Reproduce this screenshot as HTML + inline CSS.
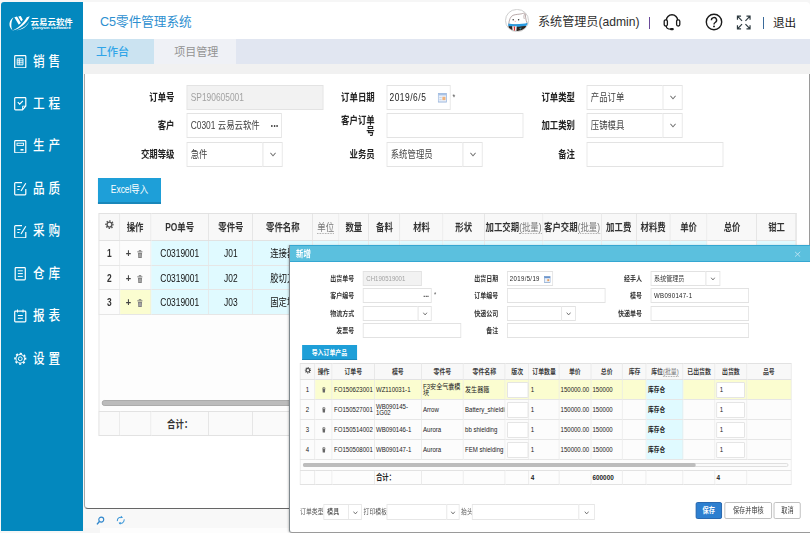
<!DOCTYPE html><html lang="zh"><head><meta charset="utf-8"><title>C5零件管理系统</title><style>
*{box-sizing:border-box;margin:0;padding:0}
html,body{width:810px;height:533px;overflow:hidden;background:#f6f6f6}
body{position:relative;font-family:"Liberation Sans","Noto Sans CJK SC",sans-serif;color:#222}
div,span,svg{position:absolute}
span.t{position:static}
.side{left:1px;top:2px;width:82.400px;height:529px;background:#0388be;border-radius:3px 0 0 0}
.mi{left:13px;width:70px;height:16px;color:#fff;font-size:13.500px;line-height:16px;font-weight:500}
.mi svg{left:0;top:1.300px}
.mi b{position:absolute;left:19px;top:0;font-weight:500;letter-spacing:4.500px;white-space:nowrap;transform-origin:0 0;transform:scaleX(.86)}
.head{left:83.400px;top:1.500px;width:726.600px;height:37px;background:#fff;border-radius:0 4px 0 0}
.tabs{left:83.400px;top:38.500px;width:726.600px;height:25.500px;background:#e1e6f1}
.tab{top:0;height:25.500px;line-height:27px;font-size:11px;white-space:nowrap}
.strip{left:83.400px;top:64px;width:726.600px;height:10px;background:#f1f1f1}
.panel{left:84.200px;top:74px;width:725.900px;height:434.5px;background:#fff;border-left:1px solid #a8a8a8;border-bottom:1px solid #666;border-right:1.300px solid #9a9a9a;border-radius:0 0 0 4px}
.pw{left:-.2px;top:0;width:904.38px;height:434px;transform-origin:0 0;transform:scaleX(0.8);font-size:10.5px}
.lab{font-weight:bold;text-align:right;color:#222;line-height:25px;white-space:nowrap}
.inp{border:1px solid #e3e3e3;background:#fff;line-height:23px;color:#444;white-space:nowrap;overflow:hidden;padding-left:4px}
.btn{background:#1e9fd8;border-bottom:2px solid #1987ba;color:#fff;text-align:center;line-height:23px}
.hc{background:#f8f8f8;border-right:1px solid #e2e2e2;border-bottom:1px solid #e2e2e2;border-top:1px solid #e2e2e2;text-align:center;font-weight:bold;color:#333;line-height:27px;white-space:nowrap;overflow:hidden}
.c{border-right:1px solid #e6e6e6;border-bottom:1px solid #e6e6e6;text-align:center;color:#111;line-height:24px;white-space:nowrap;overflow:hidden;background:#fcfcfc}
.dot{border-bottom:1px dotted #999;font-weight:normal;position:static;color:#777}
.bot{left:84px;top:509px;width:726px;height:18.500px;background:#f8f8f8}
.modal{left:289px;top:245px;width:521px;height:287.500px;background:#fff;border-left:1px solid #7f888d;border-bottom:1.500px solid #9a9a9a;border-radius:0 0 0 3px;box-shadow:-1px 0 2px rgba(0,0,0,.18)}
.mw{left:-1px;top:0;width:635.37px;height:286px;transform-origin:0 0;transform:scaleX(0.82);font-size:7.400px}
.mt{left:0;top:0;width:100%;height:17px;background:#5bc0de;border-top:1px solid #35a7d2;border-bottom:1px solid #35a7d2}
.ml{font-weight:bold;text-align:right;color:#333;line-height:15px;white-space:nowrap;font-size:7.3px}
.min{border:1px solid #e2e2e2;background:#fff;line-height:13px;color:#333;white-space:nowrap;overflow:hidden;padding-left:3px}
.mh{background:#f8f8f8;border-right:1px solid #e2e2e2;border-bottom:1px solid #e2e2e2;border-top:1px solid #e2e2e2;text-align:center;font-weight:bold;color:#3c3c3c;line-height:15px;white-space:nowrap;overflow:hidden;font-size:7.2px}
.mc{border-right:1px solid #e6e6e6;border-bottom:1px solid #e6e6e6;color:#222;line-height:19px;white-space:nowrap;overflow:hidden;background:#fcfcfc;padding-left:1.5px}
.cy{background:#e0faff}
.ye{background:#fbfdd0}
.dis{background:#f2f2f2;color:#a2a2a2}
.mb{border:1px solid #bbb;border-radius:2px;background:#fff;color:#333;text-align:center;line-height:15px;font-size:7.5px}
</style></head><body>
<div class="side">
<svg style="left:-1px;top:-2px" width="84" height="40" viewBox="0 0 84 40">
<path d="M13.500 17.300C9 20 7.800 26.500 12.500 30.300C10.600 26.500 11.200 21 13.500 17.300z" fill="#fff"/>
<path d="M14.300 17.200l2.700-.8l3.800 6.600l-2 1.800zM18.300 16.400l2.500-.4l2 3.700l-1.500 1.700z" fill="#fff"/>
<path d="M11.800 30.700C18 28.500 24 22.500 26.800 17.200l3-.9C26.500 23.500 19.500 29.800 11.800 30.700z" fill="#fff"/>
<path d="M16.500 30.300C22 29.300 27 25.500 29.300 21.300C27.500 26.500 21.500 30.500 16.500 30.300z" fill="#fff"/>
<text x="30.500" y="25.100" font-size="7.800" font-weight="bold" fill="#fff" font-family="'Liberation Sans','Noto Sans CJK SC',sans-serif" textLength="42.300" lengthAdjust="spacingAndGlyphs">云易云软件</text>
<text x="32" y="29.200" font-size="3.300" font-weight="bold" fill="#fff" font-family="'Liberation Sans',sans-serif" textLength="39" lengthAdjust="spacingAndGlyphs">yunyun software</text>
</svg>
<div class="mi" style="top:51.5px"><svg width="12.500" height="13.500" viewBox="0 0 12.500 13.500"><rect x=".7" y=".7" width="11.100" height="12.100" rx=".8" stroke="#fff" fill="none" stroke-width="1.200"/><path d="M3.200 3.800h5.800v6h-5.800zM3.200 5.800h5.800M3.200 7.800h5.800M5.300 3.800v6" stroke="#fff" fill="none" stroke-width=".9"/></svg><b>销售</b></div>
<div class="mi" style="top:94px"><svg width="12.500" height="13.500" viewBox="0 0 12.500 13.500"><path d="M11.800 9v-7.500a.8.800 0 0 0-.8-.8h-9.500a.8.800 0 0 0-.8.800v10.500a.8.800 0 0 0 .8.800h7z" stroke="#fff" fill="none" stroke-width="1.200"/><path d="M8.500 12.500v-3.300h3.300" stroke="#fff" fill="none" stroke-width=".9"/><path d="M3.800 5.200l1.900 2l3.200-3.400" stroke="#fff" fill="none" stroke-width="1.200"/></svg><b>工程</b></div>
<div class="mi" style="top:136.4px"><svg width="12.500" height="13.500" viewBox="0 0 12.500 13.500"><rect x=".7" y=".7" width="11.100" height="12.100" rx=".8" stroke="#fff" fill="none" stroke-width="1.200"/><rect x="3" y="3.200" width="6.500" height="2.200" stroke="#fff" fill="none" stroke-width=".9"/><path d="M6.500 9.800h3" stroke="#fff" fill="none" stroke-width="1.600"/></svg><b>生产</b></div>
<div class="mi" style="top:179px"><svg width="12.500" height="13.500" viewBox="0 0 12.500 13.500"><path d="M11.800 7v5a.8.800 0 0 1-.8.800h-9.500a.8.800 0 0 1-.8-.8v-10.500a.8.800 0 0 1 .8-.8h6.500" stroke="#fff" fill="none" stroke-width="1.200"/><path d="M3.300 4.500h3.200M3.300 7.500h2.200" stroke="#fff" fill="none" stroke-width="1"/><path d="M7 9l4.800-7.800" stroke="#fff" fill="none" stroke-width="1.200"/></svg><b>品质</b></div>
<div class="mi" style="top:221.3px"><svg width="12.500" height="13.500" viewBox="0 0 12.500 13.500"><path d="M11.800 7v5a.8.800 0 0 1-.8.800h-9.500a.8.800 0 0 1-.8-.8v-10.500a.8.800 0 0 1 .8-.8h6.500" stroke="#fff" fill="none" stroke-width="1.200"/><path d="M3.300 4.500h3.200M3.300 7.500h2.200" stroke="#fff" fill="none" stroke-width="1"/><path d="M7 9l4.800-7.800" stroke="#fff" fill="none" stroke-width="1.200"/></svg><b>采购</b></div>
<div class="mi" style="top:263.8px"><svg width="12.500" height="13.500" viewBox="0 0 12.500 13.500"><rect x="1.200" y=".7" width="10.100" height="12.100" rx=".8" stroke="#fff" fill="none" stroke-width="1.200"/><path d="M3.800 3.800h5M3.800 6.600h5M3.800 9.400h5" stroke="#fff" fill="none" stroke-width="1"/></svg><b>仓库</b></div>
<div class="mi" style="top:306.2px"><svg width="12.500" height="13.500" viewBox="0 0 12.500 13.500"><rect x=".7" y="2.200" width="11.100" height="10.600" rx=".8" stroke="#fff" fill="none" stroke-width="1.200"/><path d="M3.500.5v3M9 .5v3M3.800 6.500h5M3.800 9.300h5" stroke="#fff" fill="none" stroke-width="1"/></svg><b>报表</b></div>
<div class="mi" style="top:348.7px"><svg width="12.500" height="13.500" viewBox="0 0 12.500 13.500"><circle cx="6.250" cy="6.750" r="1.900" stroke="#fff" fill="none" stroke-width="1"/><circle cx="6.250" cy="6.750" r="4.300" stroke="#fff" fill="none" stroke-width="1"/><circle cx="6.250" cy="6.750" r="5.300" stroke="#fff" fill="none" stroke-width="1.600" stroke-dasharray="2.100 2.063" transform="rotate(-12 6.250 6.750)"/></svg><b>设置</b></div>
</div>
<div class="head">
<span style="left:16.6px;top:11px;font-size:12.600px;line-height:18px;color:#2d8fd0;white-space:nowrap">C5零件管理系统</span>
<div style="left:422px;top:7.300px;width:23.600px;height:23.600px;border-radius:50%;overflow:hidden;border:.9px solid #cfcfcf;background:#fff"><svg style="left:-1.100px;top:-1.100px" width="24" height="24" viewBox="0 0 24 24">
<path d="M3.700 15.500C4.200 10.500 5.500 7.500 8 6.300C11 5.200 14 5.400 16.500 4.800C18 4.400 19.300 3.700 20.300 4.300C20.300 7 20.700 9.500 21.200 11.500C21.700 13 22.200 14 22.200 15.500z" fill="#fff" stroke="#8a7070" stroke-width=".6"/>
<path d="M19.800 4.800C18.800 6 18.600 8 19.300 10" fill="none" stroke="#8a7070" stroke-width=".5"/>
<path d="M3.500 16.500h17.500v8h-17.500z" fill="#2e2420"/>
<path d="M3.300 14.400C8 15.600 17 15.400 22.800 13.700l.2 2.500C17 18 8 18 3.300 17z" fill="#2a9be0"/>
<path d="M7.200 17.300h4.500l-.4 5.700h-3.600z" fill="#fff"/><path d="M8.700 17.400h1.500l-.2 5.600h-1.100z" fill="#e03030"/>
<circle cx="8.200" cy="10.800" r=".75" fill="#333"/><circle cx="13.600" cy="10.800" r=".75" fill="#333"/>
<path d="M9.800 11.800l.5 1l.5-1" fill="none" stroke="#e88" stroke-width=".5"/>
<path d="M14 19.500l2.500-1.200l-.5 2.500z" fill="#3a8a9a"/>
</svg></div>
<span style="left:454.6px;top:12px;font-size:12.100px;line-height:17px;color:#2e2e2e;white-space:nowrap">系统管理员(admin)</span>
<span style="left:565.6px;top:15px;width:1.300px;height:12.500px;background:#6a4a9a"></span>
<svg style="left:578.6px;top:11px" width="20" height="18" viewBox="0 0 20 18">
<path d="M4.300 12v-4.500a5.700 5.700 0 0 1 11.400 0v4.500" fill="none" stroke="#1a1a1a" stroke-width="1.500"/>
<rect x="2.200" y="6.800" width="3.200" height="6.200" rx="1.500" fill="#fff" stroke="#1a1a1a" stroke-width="1.300"/>
<rect x="14.600" y="6.800" width="3.200" height="6.200" rx="1.500" fill="#fff" stroke="#1a1a1a" stroke-width="1.300"/>
<path d="M4.300 13c0 2.300 1.700 3.200 4.500 3.200" fill="none" stroke="#1a1a1a" stroke-width="1.200"/>
<rect x="8" y="15" width="3.800" height="2.300" rx="1.100" fill="#1a1a1a"/>
</svg>
<svg style="left:622.1px;top:11px" width="18" height="18" viewBox="0 0 18 18">
<circle cx="9" cy="9" r="7.700" fill="none" stroke="#1a1a1a" stroke-width="1.400"/>
<path d="M6.400 7.300a2.600 2.600 0 1 1 3.800 2.200c-.9.500-1.200.9-1.200 1.900" fill="none" stroke="#1a1a1a" stroke-width="1.400"/>
<circle cx="9" cy="13.400" r=".95" fill="#1a1a1a"/></svg>
<svg style="left:653.1px;top:13.5px" width="15.500" height="15" viewBox="0 0 15 15">
<path d="M5.800 5.800L1.200 1.200M1.200 4.800v-3.600h3.600M9.200 5.800l4.600-4.600M10.200 1.200h3.600v3.600M5.800 9.200l-4.600 4.600M1.200 10.200v3.600h3.600M9.200 9.200l4.600 4.600M13.800 10.200v3.600h-3.600" fill="none" stroke="#2e3a40" stroke-width="1.200"/></svg>
<span style="left:679.6px;top:15px;width:1.200px;height:12px;background:#3a6a9a"></span>
<span style="left:689.6px;top:12.5px;font-size:11.600px;line-height:17px;color:#1a1a1a;white-space:nowrap">退出</span>
</div>
<div class="tabs">
<div class="tab" style="left:0;width:70.800px;background:#cbe3f1;color:#30a5e8;padding-left:12.600px;font-weight:500">工作台</div>
<div class="tab" style="left:70.800px;width:82.300px;background:#eff1f6;color:#939393;padding-left:20px">项目管理</div>
</div><div class="strip"></div>
<div style="left:100px;top:527.500px;width:710px;height:6px;background:#fdfdfd"></div>
<div class="bot">
<svg style="left:11.500px;top:7px" width="9" height="9.500" viewBox="0 0 9 10"><circle cx="5.300" cy="3.800" r="2.600" fill="none" stroke="#2f86cc" stroke-width="1.200"/><path d="M3.300 5.800l-2.500 3" stroke="#2f86cc" stroke-width="1.500"/></svg>
<svg style="left:31.500px;top:6.200px" width="9.500" height="10.500" viewBox="0 0 10 11"><path d="M1.500 6.500a3.500 3.500 0 0 1 5-3.800M8.500 4.500a3.500 3.500 0 0 1-5 3.800" fill="none" stroke="#3a96d8" stroke-width="1.100"/><path d="M5.500 0.800l1.800 2l-2.600.6zM4.500 10.200l-1.800-2l2.600-.6z" fill="#3a96d8"/></svg>
</div>
<div class="panel"><div class="pw">
<div class="lab" style="left:24.38px;top:10.5px;width:87.5px;height:25.2px;">订单号</div>
<div class="inp dis" style="left:127.12px;top:10.5px;width:171px;height:25.2px;">SP190605001</div>
<div class="lab" style="left:24.38px;top:39px;width:87.5px;height:25.3px;">客户</div>
<div class="inp " style="left:127.12px;top:39px;width:118.75px;height:25.3px;">C0301 云易云软件<b style="position:absolute;right:3px;top:-2.500px;font-size:12px">...</b></div>
<div class="lab" style="left:24.38px;top:68px;width:87.5px;height:24.7px;">交期等级</div>
<div class="inp" style="left:127.12px;top:68px;width:96px;height:24.7px;">急件</div>
<div class="inp" style="left:221.88px;top:68px;width:25.25px;height:24.7px;padding:0"><svg style="left:50%;top:50%;margin:-2.500px 0 0 -4px" width="8" height="5" viewBox="0 0 8 5"><path d="M.8.800l3.200 3l3.200-3" fill="none" stroke="#6e6e6e" stroke-width="1.100"/></svg></div>
<div class="lab" style="left:274.62px;top:10.5px;width:87.5px;height:25.2px;">订单日期</div>
<div class="inp " style="left:377.12px;top:10.5px;width:79.88px;height:25.2px;"><span class="t" style="letter-spacing:.65px;margin-left:-1.500px;color:#222">2019/6/5</span><svg style="right:3px;top:7.500px" width="11.500" height="9.500" viewBox="0 0 12 10"><rect x=".5" y=".5" width="11" height="9" fill="#eaf1fb" stroke="#9bb6dc"/><rect x=".5" y=".5" width="11" height="2" fill="#a9c3e6"/><rect x="6" y="4" width="4" height="3.500" fill="#f0b27a"/><path d="M2 4.800h3M2 7h3" stroke="#b5c7dd" stroke-width=".8"/></svg></div>
<div class="" style="left:459.38px;top:17px;width:6.88px;height:13px;color:#555;font-size:9px;line-height:13px">*</div>
<div class="lab" style="left:311.25px;top:41.4px;width:50.87px;height:24.9px;white-space:normal;line-height:10.600px;word-break:break-all">客户订单号</div>
<div class="inp " style="left:377.12px;top:39px;width:171px;height:25.3px;"></div>
<div class="lab" style="left:274.62px;top:68px;width:87.5px;height:24.7px;">业务员</div>
<div class="inp" style="left:377.12px;top:68px;width:96px;height:24.7px;">系统管理员</div>
<div class="inp" style="left:471.88px;top:68px;width:25.25px;height:24.7px;padding:0"><svg style="left:50%;top:50%;margin:-2.500px 0 0 -4px" width="8" height="5" viewBox="0 0 8 5"><path d="M.8.800l3.200 3l3.200-3" fill="none" stroke="#6e6e6e" stroke-width="1.100"/></svg></div>
<div class="lab" style="left:525px;top:10.5px;width:87.5px;height:25.2px;">订单类型</div>
<div class="inp" style="left:627.25px;top:10.5px;width:96.38px;height:25.2px;">产品订单</div>
<div class="inp" style="left:722.37px;top:10.5px;width:25.13px;height:25.2px;padding:0"><svg style="left:50%;top:50%;margin:-2.500px 0 0 -4px" width="8" height="5" viewBox="0 0 8 5"><path d="M.8.800l3.200 3l3.200-3" fill="none" stroke="#6e6e6e" stroke-width="1.100"/></svg></div>
<div class="lab" style="left:525px;top:39px;width:87.5px;height:25.3px;">加工类别</div>
<div class="inp" style="left:627.25px;top:39px;width:96.38px;height:25.3px;">压铸模具</div>
<div class="inp" style="left:722.37px;top:39px;width:25.13px;height:25.3px;padding:0"><svg style="left:50%;top:50%;margin:-2.500px 0 0 -4px" width="8" height="5" viewBox="0 0 8 5"><path d="M.8.800l3.200 3l3.200-3" fill="none" stroke="#6e6e6e" stroke-width="1.100"/></svg></div>
<div class="lab" style="left:525px;top:68px;width:87.5px;height:24.7px;">备注</div>
<div class="inp " style="left:627.25px;top:68px;width:171px;height:24.7px;"></div>
<div class="btn" style="left:16.25px;top:104px;width:78.75px;height:25.5px;">Excel导入</div>
<div class="" style="left:17px;top:139px;width:872.5px;height:222.6px;border:1px solid #e2e2e2;background:#fdfdfd"></div>
<div class="hc" style="left:17px;top:139px;width:26.75px;height:28px;border-left:1px solid #e2e2e2;"><svg style="left:50%;top:50%;margin:-6.600px 0 0 -5.600px" width="11.200" height="9.200" viewBox="0 0 10 10" preserveAspectRatio="none"><circle cx="5" cy="5" r="2.700" fill="none" stroke="#555" stroke-width="1.500"/><circle cx="5" cy="5" r="4" fill="none" stroke="#555" stroke-width="1.600" stroke-dasharray="1.571 1.571" transform="rotate(-11 5 5)"/></svg></div>
<div class="hc" style="left:43.75px;top:139px;width:38.75px;height:28px;">操作</div>
<div class="hc" style="left:82.5px;top:139px;width:72.75px;height:28px;">PO单号</div>
<div class="hc" style="left:155.25px;top:139px;width:55.12px;height:28px;">零件号</div>
<div class="hc" style="left:210.37px;top:139px;width:74.75px;height:28px;">零件名称</div>
<div class="hc" style="left:285.12px;top:139px;width:32.63px;height:28px;"><span class="dot">单位</span></div>
<div class="hc" style="left:317.75px;top:139px;width:37.62px;height:28px;">数量</div>
<div class="hc" style="left:355.38px;top:139px;width:38.88px;height:28px;">备料</div>
<div class="hc" style="left:394.25px;top:139px;width:54px;height:28px;">材料</div>
<div class="hc" style="left:448.25px;top:139px;width:51.25px;height:28px;">形状</div>
<div class="hc" style="left:499.5px;top:139px;width:73.38px;height:28px;">加工交期<span class="dot">(批量)</span></div>
<div class="hc" style="left:572.88px;top:139px;width:72.88px;height:28px;">客户交期<span class="dot">(批量)</span></div>
<div class="hc" style="left:645.75px;top:139px;width:43.75px;height:28px;">加工费</div>
<div class="hc" style="left:689.5px;top:139px;width:42.25px;height:28px;">材料费</div>
<div class="hc" style="left:731.75px;top:139px;width:46.5px;height:28px;">单价</div>
<div class="hc" style="left:778.25px;top:139px;width:62.12px;height:28px;">总价</div>
<div class="hc" style="left:840.38px;top:139px;width:49.12px;height:28px;">钳工</div>
<div class="c" style="left:17px;top:167px;width:26.75px;height:25px;border-left:1px solid #e2e2e2;"><b style="color:#333">1</b></div>
<div class="c" style="left:43.75px;top:167px;width:38.75px;height:25px;"><b style="font-size:11.500px;color:#444;margin-left:-2px">+</b><svg style="position:static;vertical-align:-1px;margin-left:7px" width="7.500" height="8.500" viewBox="0 0 8 9"><path d="M.3 1.900h7.400M2.800 1.600v-1.100h2.400v1.100" stroke="#777" stroke-width="1" fill="none"/><path d="M1.200 3h5.600l-.5 5.600h-4.600z" fill="#808080"/><path d="M3 4v3.500M5 4v3.500" stroke="#ddd" stroke-width=".6"/></svg></div>
<div class="c cy" style="left:82.5px;top:167px;width:72.75px;height:25px;">C0319001</div>
<div class="c cy" style="left:155.25px;top:167px;width:55.12px;height:25px;">J01</div>
<div class="c cy" style="left:210.37px;top:167px;width:74.75px;height:25px;">连接器</div>
<div class="c cy" style="left:285.12px;top:167px;width:32.63px;height:25px;"></div>
<div class="c cy" style="left:317.75px;top:167px;width:37.62px;height:25px;"></div>
<div class="c cy" style="left:355.38px;top:167px;width:38.88px;height:25px;"></div>
<div class="c cy" style="left:394.25px;top:167px;width:54px;height:25px;"></div>
<div class="c cy" style="left:448.25px;top:167px;width:51.25px;height:25px;"></div>
<div class="c cy" style="left:499.5px;top:167px;width:73.38px;height:25px;"></div>
<div class="c cy" style="left:572.88px;top:167px;width:72.88px;height:25px;"></div>
<div class="c cy" style="left:645.75px;top:167px;width:43.75px;height:25px;"></div>
<div class="c cy" style="left:689.5px;top:167px;width:42.25px;height:25px;"></div>
<div class="c cy" style="left:731.75px;top:167px;width:46.5px;height:25px;"></div>
<div class="c" style="left:778.25px;top:167px;width:62.12px;height:25px;"></div>
<div class="c cy" style="left:840.38px;top:167px;width:49.12px;height:25px;"></div>
<div class="c" style="left:17px;top:192px;width:26.75px;height:24px;border-left:1px solid #e2e2e2;"><b style="color:#333">2</b></div>
<div class="c" style="left:43.75px;top:192px;width:38.75px;height:24px;"><b style="font-size:11.500px;color:#444;margin-left:-2px">+</b><svg style="position:static;vertical-align:-1px;margin-left:7px" width="7.500" height="8.500" viewBox="0 0 8 9"><path d="M.3 1.900h7.400M2.800 1.600v-1.100h2.400v1.100" stroke="#777" stroke-width="1" fill="none"/><path d="M1.200 3h5.600l-.5 5.600h-4.600z" fill="#808080"/><path d="M3 4v3.500M5 4v3.500" stroke="#ddd" stroke-width=".6"/></svg></div>
<div class="c cy" style="left:82.5px;top:192px;width:72.75px;height:24px;">C0319001</div>
<div class="c cy" style="left:155.25px;top:192px;width:55.12px;height:24px;">J02</div>
<div class="c cy" style="left:210.37px;top:192px;width:74.75px;height:24px;">胶切刀</div>
<div class="c cy" style="left:285.12px;top:192px;width:32.63px;height:24px;"></div>
<div class="c cy" style="left:317.75px;top:192px;width:37.62px;height:24px;"></div>
<div class="c cy" style="left:355.38px;top:192px;width:38.88px;height:24px;"></div>
<div class="c cy" style="left:394.25px;top:192px;width:54px;height:24px;"></div>
<div class="c cy" style="left:448.25px;top:192px;width:51.25px;height:24px;"></div>
<div class="c cy" style="left:499.5px;top:192px;width:73.38px;height:24px;"></div>
<div class="c cy" style="left:572.88px;top:192px;width:72.88px;height:24px;"></div>
<div class="c cy" style="left:645.75px;top:192px;width:43.75px;height:24px;"></div>
<div class="c cy" style="left:689.5px;top:192px;width:42.25px;height:24px;"></div>
<div class="c cy" style="left:731.75px;top:192px;width:46.5px;height:24px;"></div>
<div class="c" style="left:778.25px;top:192px;width:62.12px;height:24px;"></div>
<div class="c cy" style="left:840.38px;top:192px;width:49.12px;height:24px;"></div>
<div class="c" style="left:17px;top:216px;width:26.75px;height:25px;border-left:1px solid #e2e2e2;"><b style="color:#333">3</b></div>
<div class="c ye" style="left:43.75px;top:216px;width:38.75px;height:25px;"><b style="font-size:11.500px;color:#444;margin-left:-2px">+</b><svg style="position:static;vertical-align:-1px;margin-left:7px" width="7.500" height="8.500" viewBox="0 0 8 9"><path d="M.3 1.900h7.400M2.800 1.600v-1.100h2.400v1.100" stroke="#777" stroke-width="1" fill="none"/><path d="M1.200 3h5.600l-.5 5.600h-4.600z" fill="#808080"/><path d="M3 4v3.500M5 4v3.500" stroke="#ddd" stroke-width=".6"/></svg></div>
<div class="c cy" style="left:82.5px;top:216px;width:72.75px;height:25px;">C0319001</div>
<div class="c cy" style="left:155.25px;top:216px;width:55.12px;height:25px;">J03</div>
<div class="c cy" style="left:210.37px;top:216px;width:74.75px;height:25px;">固定块</div>
<div class="c cy" style="left:285.12px;top:216px;width:32.63px;height:25px;"></div>
<div class="c cy" style="left:317.75px;top:216px;width:37.62px;height:25px;"></div>
<div class="c cy" style="left:355.38px;top:216px;width:38.88px;height:25px;"></div>
<div class="c cy" style="left:394.25px;top:216px;width:54px;height:25px;"></div>
<div class="c cy" style="left:448.25px;top:216px;width:51.25px;height:25px;"></div>
<div class="c cy" style="left:499.5px;top:216px;width:73.38px;height:25px;"></div>
<div class="c cy" style="left:572.88px;top:216px;width:72.88px;height:25px;"></div>
<div class="c cy" style="left:645.75px;top:216px;width:43.75px;height:25px;"></div>
<div class="c cy" style="left:689.5px;top:216px;width:42.25px;height:25px;"></div>
<div class="c cy" style="left:731.75px;top:216px;width:46.5px;height:25px;"></div>
<div class="c" style="left:778.25px;top:216px;width:62.12px;height:25px;"></div>
<div class="c cy" style="left:840.38px;top:216px;width:49.12px;height:25px;"></div>
<div class="" style="left:21.25px;top:325.7px;width:862.5px;height:6.3px;background:#bcbcbc;border:1px solid #a6a6a6;border-radius:3px"></div>
<div class="hc" style="left:17px;top:337px;width:26.75px;height:24.6px;border-left:1px solid #e2e2e2;line-height:24px;background:#fafafa"></div>
<div class="hc" style="left:43.75px;top:337px;width:38.75px;height:24.6px;line-height:24px;background:#fafafa"></div>
<div class="hc" style="left:82.5px;top:337px;width:72.75px;height:24.6px;line-height:24px;background:#fafafa">合计：</div>
<div class="hc" style="left:155.25px;top:337px;width:55.12px;height:24.6px;line-height:24px;background:#fafafa"></div>
<div class="hc" style="left:210.37px;top:337px;width:74.75px;height:24.6px;line-height:24px;background:#fafafa"></div>
<div class="hc" style="left:285.12px;top:337px;width:32.63px;height:24.6px;line-height:24px;background:#fafafa"></div>
<div class="hc" style="left:317.75px;top:337px;width:37.62px;height:24.6px;line-height:24px;background:#fafafa"></div>
<div class="hc" style="left:355.38px;top:337px;width:38.88px;height:24.6px;line-height:24px;background:#fafafa"></div>
<div class="hc" style="left:394.25px;top:337px;width:54px;height:24.6px;line-height:24px;background:#fafafa"></div>
<div class="hc" style="left:448.25px;top:337px;width:51.25px;height:24.6px;line-height:24px;background:#fafafa"></div>
<div class="hc" style="left:499.5px;top:337px;width:73.38px;height:24.6px;line-height:24px;background:#fafafa"></div>
<div class="hc" style="left:572.88px;top:337px;width:72.88px;height:24.6px;line-height:24px;background:#fafafa"></div>
<div class="hc" style="left:645.75px;top:337px;width:43.75px;height:24.6px;line-height:24px;background:#fafafa"></div>
<div class="hc" style="left:689.5px;top:337px;width:42.25px;height:24.6px;line-height:24px;background:#fafafa"></div>
<div class="hc" style="left:731.75px;top:337px;width:46.5px;height:24.6px;line-height:24px;background:#fafafa"></div>
<div class="hc" style="left:778.25px;top:337px;width:62.12px;height:24.6px;line-height:24px;background:#fafafa"></div>
<div class="hc" style="left:840.38px;top:337px;width:49.12px;height:24.6px;line-height:24px;background:#fafafa"></div>
</div></div>
<div class="modal"><div class="mt"></div><div class="mw">
<div class="" style="left:8.54px;top:2px;width:41.46px;height:14px;color:#fff;font-weight:bold;font-size:9px;line-height:15px;white-space:nowrap">新增</div>
<div class="" style="left:616.46px;top:5.8px;width:8.54px;height:6.5px;"><svg style="left:0;top:0" width="100%" height="100%" viewBox="0 0 8 8" preserveAspectRatio="none"><path d="M1 1l6 6M7 1l-6 6" stroke="#c4e6f4" stroke-width="1" fill="none"/></svg></div>
<div class="ml" style="left:18.66px;top:26px;width:60.98px;height:15px;">出货单号</div>
<div class="min dis" style="left:90.24px;top:26px;width:71.95px;height:15px;">CH190519001</div>
<div class="ml" style="left:18.66px;top:43px;width:60.98px;height:15px;">客户编号</div>
<div class="min " style="left:90.24px;top:43px;width:83.54px;height:15px;"><b style="position:absolute;right:2px;top:-1.500px;font-size:8.500px">...</b></div>
<div class="" style="left:176.83px;top:45px;width:4.88px;height:10px;color:#555;font-size:7px;line-height:9px">*</div>
<div class="ml" style="left:18.66px;top:60.5px;width:60.98px;height:15px;">物流方式</div>
<div class="min" style="left:90.24px;top:60.5px;width:67.56px;height:15px;"></div>
<div class="min" style="left:156.83px;top:60.5px;width:17.56px;height:15px;padding:0"><svg style="left:50%;top:50%;margin:-1.500px 0 0 -3px" width="6" height="4" viewBox="0 0 6 4"><path d="M.6.600l2.400 2.300l2.400-2.300" fill="none" stroke="#555" stroke-width=".9"/></svg></div>
<div class="ml" style="left:18.66px;top:78px;width:60.98px;height:15px;">发票号</div>
<div class="min " style="left:90.24px;top:78px;width:120.12px;height:15px;"></div>
<div class="ml" style="left:194.15px;top:26px;width:60.98px;height:15px;">出货日期</div>
<div class="min " style="left:265.85px;top:26px;width:56.59px;height:15px;"><span class="t" style="letter-spacing:.4px;color:#222;margin-left:-.5px">2019/5/19</span><svg style="right:2px;top:3.500px" width="8" height="7" viewBox="0 0 12 10"><rect x=".5" y=".5" width="11" height="9" fill="#e8f0fa" stroke="#7a9cc8"/><rect x=".5" y=".5" width="11" height="2.500" fill="#6a94cc"/><rect x="6" y="4.500" width="3.500" height="3" fill="#e8a060"/></svg></div>
<div class="ml" style="left:194.15px;top:43px;width:60.98px;height:15px;">订单编号</div>
<div class="min " style="left:265.85px;top:43px;width:120.49px;height:15px;"></div>
<div class="ml" style="left:194.15px;top:60.5px;width:60.98px;height:15px;">快递公司</div>
<div class="min" style="left:265.85px;top:60.5px;width:67.2px;height:15px;"></div>
<div class="min" style="left:332.07px;top:60.5px;width:18.05px;height:15px;padding:0"><svg style="left:50%;top:50%;margin:-1.500px 0 0 -3px" width="6" height="4" viewBox="0 0 6 4"><path d="M.6.600l2.400 2.300l2.400-2.300" fill="none" stroke="#555" stroke-width=".9"/></svg></div>
<div class="ml" style="left:194.15px;top:78px;width:60.98px;height:15px;">备注</div>
<div class="min " style="left:265.85px;top:78px;width:295.24px;height:15px;"></div>
<div class="ml" style="left:369.51px;top:26px;width:60.98px;height:15px;">经手人</div>
<div class="min" style="left:441.22px;top:26px;width:67.44px;height:15px;">系统管理员</div>
<div class="min" style="left:507.68px;top:26px;width:17.93px;height:15px;padding:0"><svg style="left:50%;top:50%;margin:-1.500px 0 0 -3px" width="6" height="4" viewBox="0 0 6 4"><path d="M.6.600l2.400 2.300l2.400-2.300" fill="none" stroke="#555" stroke-width=".9"/></svg></div>
<div class="ml" style="left:369.51px;top:43px;width:60.98px;height:15px;">模号</div>
<div class="min " style="left:441.22px;top:43px;width:119.88px;height:15px;"><span class="t" style="letter-spacing:.35px;color:#222">WB090147-1</span></div>
<div class="ml" style="left:369.51px;top:60.5px;width:60.98px;height:15px;">快递单号</div>
<div class="min " style="left:441.22px;top:60.5px;width:119.88px;height:15px;"></div>
<div class="btn" style="left:15.85px;top:100.2px;width:66.83px;height:15.1px;line-height:15px;font-weight:bold;font-size:7.2px;border-bottom-width:1.500px">导入订单产品</div>
<div class="" style="left:13.17px;top:118px;width:599.39px;height:122px;border:1px solid #e2e2e2;background:#fdfdfd"></div>
<div class="mh" style="left:13.17px;top:118px;width:18.78px;height:17px;border-left:1px solid #e2e2e2;"><svg style="left:50%;top:50%;margin:-4.200px 0 0 -4px" width="8" height="6.600" viewBox="0 0 10 10" preserveAspectRatio="none"><circle cx="5" cy="5" r="2.700" fill="none" stroke="#444" stroke-width="1.600"/><circle cx="5" cy="5" r="4" fill="none" stroke="#444" stroke-width="1.700" stroke-dasharray="1.571 1.571" transform="rotate(-11 5 5)"/></svg></div>
<div class="mh" style="left:31.95px;top:118px;width:21.46px;height:17px;">操作</div>
<div class="mh" style="left:53.41px;top:118px;width:51.1px;height:17px;">订单号</div>
<div class="mh" style="left:104.51px;top:118px;width:57.44px;height:17px;">模号</div>
<div class="mh" style="left:161.95px;top:118px;width:51.22px;height:17px;">零件号</div>
<div class="mh" style="left:213.17px;top:118px;width:51.22px;height:17px;">零件名称</div>
<div class="mh" style="left:264.39px;top:118px;width:29.02px;height:17px;">版次</div>
<div class="mh" style="left:293.41px;top:118px;width:36.22px;height:17px;">订单数量</div>
<div class="mh" style="left:329.63px;top:118px;width:38.9px;height:17px;">单价</div>
<div class="mh" style="left:368.54px;top:118px;width:38.78px;height:17px;">总价</div>
<div class="mh" style="left:407.32px;top:118px;width:29.15px;height:17px;">库存</div>
<div class="mh" style="left:436.46px;top:118px;width:45px;height:17px;">库位<span class="dot">(批量)</span></div>
<div class="mh" style="left:481.46px;top:118px;width:38.41px;height:17px;">已出货数</div>
<div class="mh" style="left:519.88px;top:118px;width:38.9px;height:17px;">出货数</div>
<div class="mh" style="left:558.78px;top:118px;width:53.78px;height:17px;">品号</div>
<div class="mc" style="left:13.17px;top:135px;width:18.78px;height:20px;border-left:1px solid #e2e2e2;text-align:center;padding:0;">1</div>
<div class="mc ye" style="left:31.95px;top:135px;width:21.46px;height:20px;"><svg style="left:50%;top:50%;margin:-3px 0 0 -2.500px" width="5" height="6" viewBox="0 0 8 9"><path d="M.5 1.800h7M2.800 1.500v-1h2.400v1" stroke="#555" stroke-width="1" fill="none"/><path d="M1.300 2.800h5.400l-.5 5.700h-4.400z" fill="#666"/></svg></div>
<div class="mc ye" style="left:53.41px;top:135px;width:51.1px;height:20px;">FO150623001</div>
<div class="mc ye" style="left:104.51px;top:135px;width:57.44px;height:20px;">WZ110031-1</div>
<div class="mc ye" style="left:161.95px;top:135px;width:51.22px;height:20px;"><span class="t" style="display:block;line-height:6.500px;margin-top:3.500px">F3安全气囊模<br>块</span></div>
<div class="mc ye" style="left:213.17px;top:135px;width:51.22px;height:20px;">发生器箍</div>
<div class="mc ye" style="left:264.39px;top:135px;width:29.02px;height:20px;"></div>
<div class="mc ye" style="left:293.41px;top:135px;width:36.22px;height:20px;">1</div>
<div class="mc ye" style="left:329.63px;top:135px;width:38.9px;height:20px;">150000.00</div>
<div class="mc ye" style="left:368.54px;top:135px;width:38.78px;height:20px;">150000</div>
<div class="mc ye" style="left:407.32px;top:135px;width:29.15px;height:20px;"></div>
<div class="mc cy" style="left:436.46px;top:135px;width:45px;height:20px;"><b style="font-size:6.900px">库存仓</b></div>
<div class="mc ye" style="left:481.46px;top:135px;width:38.41px;height:20px;"></div>
<div class="mc ye" style="left:519.88px;top:135px;width:38.9px;height:20px;"></div>
<div class="mc ye" style="left:558.78px;top:135px;width:53.78px;height:20px;"></div>
<div class="min" style="left:266.22px;top:137px;width:25.98px;height:15.5px;border-radius:1px"></div>
<div class="min" style="left:521.34px;top:137px;width:34.76px;height:15.5px;line-height:14px;color:#222;border-radius:1px">1</div>
<div class="mc" style="left:13.17px;top:155px;width:18.78px;height:20px;border-left:1px solid #e2e2e2;text-align:center;padding:0;">2</div>
<div class="mc" style="left:31.95px;top:155px;width:21.46px;height:20px;"><svg style="left:50%;top:50%;margin:-3px 0 0 -2.500px" width="5" height="6" viewBox="0 0 8 9"><path d="M.5 1.800h7M2.800 1.500v-1h2.400v1" stroke="#555" stroke-width="1" fill="none"/><path d="M1.300 2.800h5.400l-.5 5.700h-4.400z" fill="#666"/></svg></div>
<div class="mc" style="left:53.41px;top:155px;width:51.1px;height:20px;">FO150527001</div>
<div class="mc" style="left:104.51px;top:155px;width:57.44px;height:20px;"><span class="t" style="display:block;line-height:6.500px;margin-top:3.500px">WB090145-<br>1G02</span></div>
<div class="mc" style="left:161.95px;top:155px;width:51.22px;height:20px;">Arrow</div>
<div class="mc" style="left:213.17px;top:155px;width:51.22px;height:20px;">Battery_shielding</div>
<div class="mc" style="left:264.39px;top:155px;width:29.02px;height:20px;"></div>
<div class="mc" style="left:293.41px;top:155px;width:36.22px;height:20px;">1</div>
<div class="mc" style="left:329.63px;top:155px;width:38.9px;height:20px;">150000.00</div>
<div class="mc" style="left:368.54px;top:155px;width:38.78px;height:20px;">150000</div>
<div class="mc" style="left:407.32px;top:155px;width:29.15px;height:20px;"></div>
<div class="mc cy" style="left:436.46px;top:155px;width:45px;height:20px;"><b style="font-size:6.900px">库存仓</b></div>
<div class="mc" style="left:481.46px;top:155px;width:38.41px;height:20px;"></div>
<div class="mc" style="left:519.88px;top:155px;width:38.9px;height:20px;"></div>
<div class="mc" style="left:558.78px;top:155px;width:53.78px;height:20px;"></div>
<div class="min" style="left:266.22px;top:157px;width:25.98px;height:15.5px;border-radius:1px"></div>
<div class="min" style="left:521.34px;top:157px;width:34.76px;height:15.5px;line-height:14px;color:#222;border-radius:1px">1</div>
<div class="mc" style="left:13.17px;top:175px;width:18.78px;height:20px;border-left:1px solid #e2e2e2;text-align:center;padding:0;">3</div>
<div class="mc" style="left:31.95px;top:175px;width:21.46px;height:20px;"><svg style="left:50%;top:50%;margin:-3px 0 0 -2.500px" width="5" height="6" viewBox="0 0 8 9"><path d="M.5 1.800h7M2.800 1.500v-1h2.400v1" stroke="#555" stroke-width="1" fill="none"/><path d="M1.300 2.800h5.400l-.5 5.700h-4.400z" fill="#666"/></svg></div>
<div class="mc" style="left:53.41px;top:175px;width:51.1px;height:20px;">FO150514002</div>
<div class="mc" style="left:104.51px;top:175px;width:57.44px;height:20px;">WB090146-1</div>
<div class="mc" style="left:161.95px;top:175px;width:51.22px;height:20px;">Aurora</div>
<div class="mc" style="left:213.17px;top:175px;width:51.22px;height:20px;">bb shielding</div>
<div class="mc" style="left:264.39px;top:175px;width:29.02px;height:20px;"></div>
<div class="mc" style="left:293.41px;top:175px;width:36.22px;height:20px;">1</div>
<div class="mc" style="left:329.63px;top:175px;width:38.9px;height:20px;">150000.00</div>
<div class="mc" style="left:368.54px;top:175px;width:38.78px;height:20px;">150000</div>
<div class="mc" style="left:407.32px;top:175px;width:29.15px;height:20px;"></div>
<div class="mc cy" style="left:436.46px;top:175px;width:45px;height:20px;"><b style="font-size:6.900px">库存仓</b></div>
<div class="mc" style="left:481.46px;top:175px;width:38.41px;height:20px;"></div>
<div class="mc" style="left:519.88px;top:175px;width:38.9px;height:20px;"></div>
<div class="mc" style="left:558.78px;top:175px;width:53.78px;height:20px;"></div>
<div class="min" style="left:266.22px;top:177px;width:25.98px;height:15.5px;border-radius:1px"></div>
<div class="min" style="left:521.34px;top:177px;width:34.76px;height:15.5px;line-height:14px;color:#222;border-radius:1px">1</div>
<div class="mc" style="left:13.17px;top:195px;width:18.78px;height:20px;border-left:1px solid #e2e2e2;text-align:center;padding:0;">4</div>
<div class="mc" style="left:31.95px;top:195px;width:21.46px;height:20px;"><svg style="left:50%;top:50%;margin:-3px 0 0 -2.500px" width="5" height="6" viewBox="0 0 8 9"><path d="M.5 1.800h7M2.800 1.500v-1h2.400v1" stroke="#555" stroke-width="1" fill="none"/><path d="M1.300 2.800h5.400l-.5 5.700h-4.400z" fill="#666"/></svg></div>
<div class="mc" style="left:53.41px;top:195px;width:51.1px;height:20px;">FO150508001</div>
<div class="mc" style="left:104.51px;top:195px;width:57.44px;height:20px;">WB090147-1</div>
<div class="mc" style="left:161.95px;top:195px;width:51.22px;height:20px;">Aurora</div>
<div class="mc" style="left:213.17px;top:195px;width:51.22px;height:20px;">FEM shielding</div>
<div class="mc" style="left:264.39px;top:195px;width:29.02px;height:20px;"></div>
<div class="mc" style="left:293.41px;top:195px;width:36.22px;height:20px;">1</div>
<div class="mc" style="left:329.63px;top:195px;width:38.9px;height:20px;">150000.00</div>
<div class="mc" style="left:368.54px;top:195px;width:38.78px;height:20px;">150000</div>
<div class="mc" style="left:407.32px;top:195px;width:29.15px;height:20px;"></div>
<div class="mc cy" style="left:436.46px;top:195px;width:45px;height:20px;"><b style="font-size:6.900px">库存仓</b></div>
<div class="mc" style="left:481.46px;top:195px;width:38.41px;height:20px;"></div>
<div class="mc" style="left:519.88px;top:195px;width:38.9px;height:20px;"></div>
<div class="mc" style="left:558.78px;top:195px;width:53.78px;height:20px;"></div>
<div class="min" style="left:266.22px;top:197px;width:25.98px;height:15.5px;border-radius:1px"></div>
<div class="min" style="left:521.34px;top:197px;width:34.76px;height:15.5px;line-height:14px;color:#222;border-radius:1px">1</div>
<div class="" style="left:17.07px;top:218.2px;width:591.46px;height:3.4px;border:1px solid #dcdcdc;border-radius:2px;background:#fafafa"></div>
<div class="" style="left:17.07px;top:218.2px;width:479.27px;height:3.4px;background:#bdbdbd;border-radius:2px"></div>
<div class="mh" style="left:13.17px;top:225px;width:18.78px;height:15px;border-left:1px solid #e2e2e2;text-align:left;padding-left:1.500px;line-height:13.500px;background:#fdfdfd;font-size:7.800px;color:#222"></div>
<div class="mh" style="left:31.95px;top:225px;width:21.46px;height:15px;text-align:left;padding-left:1.500px;line-height:13.500px;background:#fdfdfd;font-size:7.800px;color:#222"></div>
<div class="mh" style="left:53.41px;top:225px;width:51.1px;height:15px;text-align:left;padding-left:1.500px;line-height:13.500px;background:#fdfdfd;font-size:7.800px;color:#222"></div>
<div class="mh" style="left:104.51px;top:225px;width:57.44px;height:15px;text-align:left;padding-left:1.500px;line-height:13.500px;background:#fdfdfd;font-size:7.800px;color:#222">合计：</div>
<div class="mh" style="left:161.95px;top:225px;width:51.22px;height:15px;text-align:left;padding-left:1.500px;line-height:13.500px;background:#fdfdfd;font-size:7.800px;color:#222"></div>
<div class="mh" style="left:213.17px;top:225px;width:51.22px;height:15px;text-align:left;padding-left:1.500px;line-height:13.500px;background:#fdfdfd;font-size:7.800px;color:#222"></div>
<div class="mh" style="left:264.39px;top:225px;width:29.02px;height:15px;text-align:left;padding-left:1.500px;line-height:13.500px;background:#fdfdfd;font-size:7.800px;color:#222"></div>
<div class="mh" style="left:293.41px;top:225px;width:36.22px;height:15px;text-align:left;padding-left:1.500px;line-height:13.500px;background:#fdfdfd;font-size:7.800px;color:#222">4</div>
<div class="mh" style="left:329.63px;top:225px;width:38.9px;height:15px;text-align:left;padding-left:1.500px;line-height:13.500px;background:#fdfdfd;font-size:7.800px;color:#222"></div>
<div class="mh" style="left:368.54px;top:225px;width:38.78px;height:15px;text-align:left;padding-left:1.500px;line-height:13.500px;background:#fdfdfd;font-size:7.800px;color:#222">600000</div>
<div class="mh" style="left:407.32px;top:225px;width:29.15px;height:15px;text-align:left;padding-left:1.500px;line-height:13.500px;background:#fdfdfd;font-size:7.800px;color:#222"></div>
<div class="mh" style="left:436.46px;top:225px;width:45px;height:15px;text-align:left;padding-left:1.500px;line-height:13.500px;background:#fdfdfd;font-size:7.800px;color:#222"></div>
<div class="mh" style="left:481.46px;top:225px;width:38.41px;height:15px;text-align:left;padding-left:1.500px;line-height:13.500px;background:#fdfdfd;font-size:7.800px;color:#222"></div>
<div class="mh" style="left:519.88px;top:225px;width:38.9px;height:15px;text-align:left;padding-left:1.500px;line-height:13.500px;background:#fdfdfd;font-size:7.800px;color:#222">4</div>
<div class="mh" style="left:558.78px;top:225px;width:53.78px;height:15px;text-align:left;padding-left:1.500px;line-height:13.500px;background:#fdfdfd;font-size:7.800px;color:#222"></div>
<div class="" style="left:13.41px;top:259px;width:28.66px;height:16.2px;color:#555;line-height:16px;white-space:nowrap;font-size:7.2px">订单类型</div>
<div class="min" style="left:42.44px;top:259px;width:30.61px;height:16.2px;line-height:14px;border-color:#e6e6e6">模具</div>
<div class="min" style="left:72.07px;top:259px;width:17.32px;height:16.2px;padding:0;border-color:#e6e6e6"><svg style="left:50%;top:50%;margin:-1.500px 0 0 -3px" width="6" height="4" viewBox="0 0 6 4"><path d="M.6.600l2.400 2.300l2.400-2.300" fill="none" stroke="#555" stroke-width=".9"/></svg></div>
<div class="" style="left:90.85px;top:259px;width:28.05px;height:16.2px;color:#555;line-height:16px;white-space:nowrap;font-size:7.2px">打印模板</div>
<div class="min" style="left:119.15px;top:259px;width:73.66px;height:16.2px;line-height:14px;border-color:#e6e6e6"></div>
<div class="min" style="left:191.83px;top:259px;width:16.46px;height:16.2px;padding:0;border-color:#e6e6e6"><svg style="left:50%;top:50%;margin:-1.500px 0 0 -3px" width="6" height="4" viewBox="0 0 6 4"><path d="M.6.600l2.400 2.300l2.400-2.300" fill="none" stroke="#555" stroke-width=".9"/></svg></div>
<div class="" style="left:209.76px;top:259px;width:12.2px;height:16.2px;color:#555;line-height:16px;white-space:nowrap;font-size:7.2px">抬头</div>
<div class="min" style="left:223.17px;top:259px;width:130.98px;height:16.2px;line-height:14px;border-color:#e6e6e6"></div>
<div class="min" style="left:353.17px;top:259px;width:20px;height:16.2px;padding:0;border-color:#e6e6e6"><svg style="left:50%;top:50%;margin:-1.500px 0 0 -3px" width="6" height="4" viewBox="0 0 6 4"><path d="M.6.600l2.400 2.300l2.400-2.300" fill="none" stroke="#555" stroke-width=".9"/></svg></div>
<div class="mb" style="left:495.73px;top:257px;width:32.32px;height:16.6px;background:#2d7fd0;border-color:#1f5fa8;color:#fff;font-weight:bold">保存</div>
<div class="mb" style="left:531.34px;top:257px;width:57.68px;height:16.6px;">保存并审核</div>
<div class="mb" style="left:591.46px;top:257px;width:32.93px;height:16.6px;">取消</div>
</div></div>
</body></html>
